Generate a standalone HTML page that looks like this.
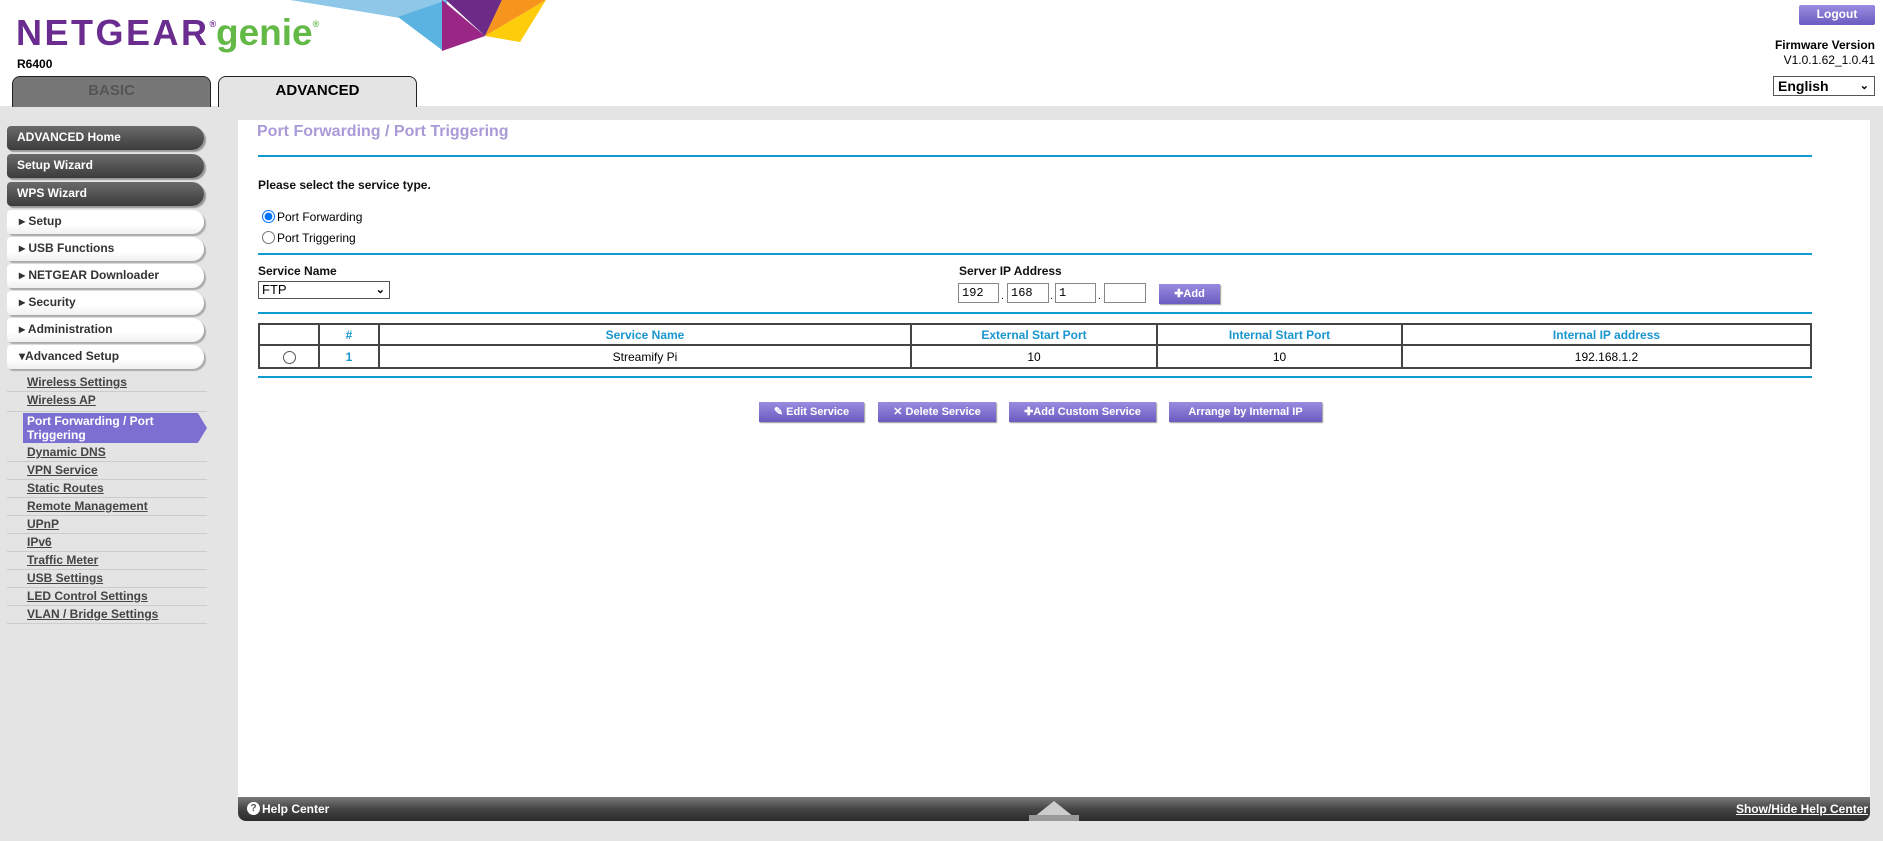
<!DOCTYPE html>
<html><head><meta charset="utf-8"><style>
*{margin:0;padding:0;box-sizing:border-box}
body{width:1883px;height:841px;background:#fff;font-family:"Liberation Sans",Arial,sans-serif;position:relative;overflow:hidden}
.a{position:absolute}
.gray{left:0;top:106px;width:1883px;height:735px;background:#e4e4e4}
.tab{top:76px;height:31px;border:1px solid #222;border-bottom:none;border-radius:8px 8px 0 0;font-size:15px;font-weight:bold;text-align:center;line-height:28px}
.btn{left:7px;width:197px;height:24px;border-radius:4px 12px 12px 4px;font-size:12px;font-weight:bold;line-height:22px;padding-left:10px}
.dk{background:linear-gradient(#6a6a6a,#3c3c3c);color:#fff;box-shadow:2px 2px 1px #999}
.lt{background:linear-gradient(#fff,#fff 60%,#f0f0f0);color:#333;box-shadow:2px 2px 1px #aaa;padding-left:12px}
.sub{left:7px;width:200px;height:18px;border-bottom:1px solid #ccc;font-size:12px;font-weight:bold;color:#444;text-decoration:underline;padding-left:20px;line-height:17px}
.panel{left:238px;top:120px;width:1632px;height:677px;background:#fff}
.bl{left:258px;width:1554px;height:2px;background:#0f9bd0}
.f12{font-size:12px;font-weight:bold;color:#111}
table{border-collapse:collapse;position:absolute;left:258px;top:323px;width:1554px}
td{border:2px solid #444;text-align:center;font-size:12px;height:23px}
th{border:2px solid #444;color:#1a96cf;font-size:12px;font-weight:bold;height:21px}
.pb{top:402px;height:20px;background:linear-gradient(#9a8be0,#6a5cc0);color:#fff;font-size:11px;font-weight:bold;text-align:center;line-height:20px;box-shadow:1px 1px 1px #999}
.ip{top:283px;height:20px;border:1px solid #888;font-family:"Liberation Mono",monospace;font-size:12px;padding:2px 3px}
</style></head><body>
<svg class="a" style="left:0;top:0" width="560" height="60">
<polygon points="290,0 447,0 447,20 400,18" fill="#8ec7e8"/>
<polygon points="398,17 447,0 442,50" fill="#5bb3e2"/>
<polygon points="442,0 485,36 442,51" fill="#9a2686"/>
<polygon points="446,0 502,0 485,36" fill="#6b2b87"/>
<polygon points="502,0 546,0 485,36" fill="#f7941d"/>
<polygon points="485,36 546,0 520,42" fill="#fdcc0a"/>
</svg>
<div class="a" style="left:16px;top:12px;font-size:36px;font-weight:900;color:#6a2c8f;letter-spacing:2.5px">NETGEAR<sup style="font-size:9px;vertical-align:18px">®</sup></div>
<div class="a" style="left:216px;top:12px;font-size:37px;font-weight:bold;color:#63b946">genie<sup style="font-size:9px;vertical-align:18px">®</sup></div>
<div class="a" style="left:17px;top:57px;font-size:12px;font-weight:bold">R6400</div>
<div class="gray a"></div>
<div class="a tab" style="left:12px;width:199px;background:#777;color:#555">BASIC</div>
<div class="a tab" style="left:218px;width:199px;background:#e4e4e4;color:#000">ADVANCED</div>
<div class="a" style="left:1799px;top:5px;width:76px;height:20px;background:linear-gradient(#9a8be0,#6a5cc0);color:#fff;font-size:12px;font-weight:bold;text-align:center;line-height:19px;border-radius:2px">Logout</div>
<div class="a" style="right:8px;top:38px;font-size:12px;text-align:right;line-height:15px"><b>Firmware Version</b><br>V1.0.1.62_1.0.41</div>
<div class="a" style="left:1773px;top:76px;width:102px;height:20px;border:1px solid #555;font-size:14px;font-weight:bold;padding-left:4px;line-height:18px;background:#fff">English<span style="position:absolute;right:5px;font-size:11px">&#8964;</span></div>

<div class="a btn dk" style="top:126px">ADVANCED Home</div>
<div class="a btn dk" style="top:154px">Setup Wizard</div>
<div class="a btn dk" style="top:182px">WPS Wizard</div>
<div class="a btn lt" style="top:210px">&#9656; Setup</div>
<div class="a btn lt" style="top:237px">&#9656; USB Functions</div>
<div class="a btn lt" style="top:264px">&#9656; NETGEAR Downloader</div>
<div class="a btn lt" style="top:291px">&#9656; Security</div>
<div class="a btn lt" style="top:318px">&#9656; Administration</div>
<div class="a btn lt" style="top:345px">&#9662;Advanced Setup</div>
<div class="a sub" style="top:374px">Wireless Settings</div>
<div class="a sub" style="top:392px;height:20px">Wireless AP</div>
<div class="a" style="left:23px;top:413px;width:184px;height:30px;background:#7b6fd2;clip-path:polygon(0 0,95% 0,100% 50%,95% 100%,0 100%);color:#fff;font-size:12px;font-weight:bold;line-height:14px;padding:1px 0 0 4px">Port Forwarding / Port<br>Triggering</div>
<div class="a sub" style="top:444px">Dynamic DNS</div>
<div class="a sub" style="top:462px">VPN Service</div>
<div class="a sub" style="top:480px">Static Routes</div>
<div class="a sub" style="top:498px">Remote Management</div>
<div class="a sub" style="top:516px">UPnP</div>
<div class="a sub" style="top:534px">IPv6</div>
<div class="a sub" style="top:552px">Traffic Meter</div>
<div class="a sub" style="top:570px">USB Settings</div>
<div class="a sub" style="top:588px">LED Control Settings</div>
<div class="a sub" style="top:606px">VLAN / Bridge Settings</div>

<div class="a panel"></div>
<div class="a" style="left:257px;top:123px;font-size:16px;font-weight:bold;color:#a99ad8">Port Forwarding / Port Triggering</div>
<div class="a bl" style="top:155px"></div>
<div class="a f12" style="left:258px;top:178px">Please select the service type.</div>
<div class="a" style="left:262px;top:210px;font-size:12px"><input type="radio" checked style="width:13px;height:13px;vertical-align:-2px;margin-right:2px">Port Forwarding</div>
<div class="a" style="left:262px;top:231px;font-size:12px"><input type="radio" style="width:13px;height:13px;vertical-align:-2px;margin-right:2px">Port Triggering</div>
<div class="a bl" style="top:253px"></div>
<div class="a f12" style="left:258px;top:264px">Service Name</div>
<div class="a" style="left:258px;top:281px;width:132px;height:18px;border:1px solid #555;font-size:13px;padding-left:3px;line-height:16px">FTP<span style="position:absolute;right:4px;font-size:11px;font-weight:bold">&#8964;</span></div>
<div class="a f12" style="left:959px;top:264px">Server IP Address</div>
<div class="a ip" style="left:958px;width:41px">192</div>
<div class="a" style="left:1001px;top:291px;font-size:10px">.</div>
<div class="a ip" style="left:1007px;width:42px">168</div>
<div class="a" style="left:1050px;top:291px;font-size:10px">.</div>
<div class="a ip" style="left:1055px;width:41px">1</div>
<div class="a" style="left:1098px;top:291px;font-size:10px">.</div>
<div class="a ip" style="left:1104px;width:42px"></div>
<div class="a pb" style="left:1159px;top:284px;width:61px">&#10010;Add</div>
<div class="a bl" style="top:312px"></div>
<table>
<tr><th style="width:60px"></th><th style="width:60px">#</th><th style="width:532px">Service Name</th><th style="width:246px">External Start Port</th><th style="width:245px">Internal Start Port</th><th>Internal IP address</th></tr>
<tr><td><span style="display:inline-block;width:13px;height:13px;border:1px solid #555;border-radius:50%;vertical-align:middle"></span></td><td style="color:#1a96cf;font-weight:bold">1</td><td>Streamify Pi</td><td>10</td><td>10</td><td>192.168.1.2</td></tr>
</table>
<div class="a bl" style="top:376px"></div>
<div class="a pb" style="left:759px;width:105px">&#9998; Edit Service</div>
<div class="a pb" style="left:878px;width:118px">&#10005; Delete Service</div>
<div class="a pb" style="left:1009px;width:147px">&#10010;Add Custom Service</div>
<div class="a pb" style="left:1169px;width:153px">Arrange by Internal IP</div>

<div class="a" style="left:238px;top:797px;width:1632px;height:24px;background:linear-gradient(#7a7a7a,#444 50%,#2a2a2a);border-radius:0 0 8px 8px"></div>
<div class="a" style="left:247px;top:802px;width:13px;height:13px;border-radius:50%;background:#fff;color:#555;font-size:10px;font-weight:bold;text-align:center;line-height:13px">?</div>
<div class="a" style="left:262px;top:802px;font-size:12px;font-weight:bold;color:#fff">Help Center</div>
<svg class="a" style="left:1029px;top:801px" width="50" height="20"><polygon points="25,0 50,20 0,20" fill="#ccc"/><rect x="0" y="14" width="50" height="6" fill="#999"/></svg>
<div class="a" style="right:15px;top:802px;font-size:12px;font-weight:bold;color:#fff;text-decoration:underline">Show/Hide Help Center</div>
</body></html>
